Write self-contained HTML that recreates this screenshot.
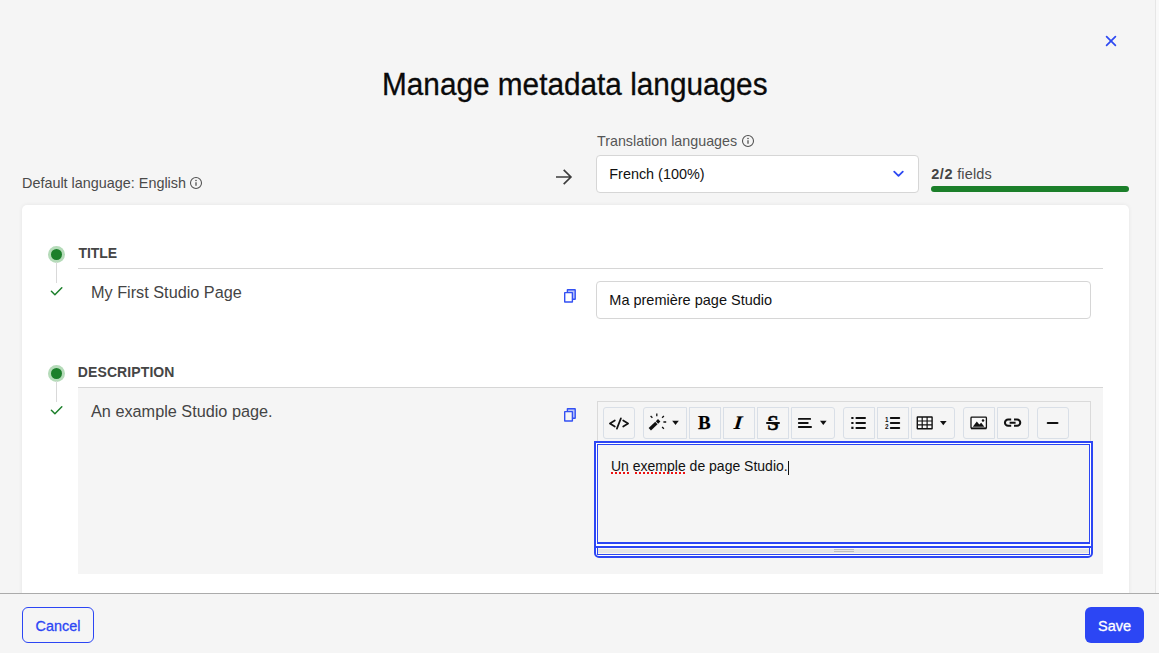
<!DOCTYPE html>
<html lang="en">
<head>
<meta charset="utf-8">
<title>Manage metadata languages</title>
<style>
*{box-sizing:border-box;margin:0;padding:0}
html,body{width:1159px;height:653px;overflow:hidden;background:#f5f5f5}
body{font-family:"Liberation Sans",sans-serif;color:#111;position:relative;-webkit-font-smoothing:antialiased}
.abs{position:absolute;white-space:nowrap}
.t{position:absolute;white-space:nowrap;line-height:1;transform-origin:0 0}
svg{position:absolute;overflow:visible}
#vline{left:1155px;top:0;width:4px;height:593px;background:#f9f9f9;border-left:1px solid #e6e6e6}
#h1{left:382px;top:68.6px;font-size:31px;color:#0a0a0a;transform:scaleX(.96);-webkit-text-stroke:.3px #0a0a0a}
#deflang{left:22px;top:175.8px;font-size:14.4px;color:#4a4a4a}
#trl{left:597px;top:133.8px;font-size:14.3px;color:#555}
#select{left:596px;top:155px;width:323px;height:38px;background:#fff;border:1px solid #d6d6d6;border-radius:4px}
#selecttxt{left:609.3px;top:166.8px;font-size:14.4px;color:#111}
#fields{left:931.3px;top:166.8px;font-size:14.5px;letter-spacing:.15px;color:#4a4a4a}
#fields b{color:#444;letter-spacing:.5px}
#bar{left:931px;top:186px;width:198px;height:6px;border-radius:3px;background:#1b7f2a}
#card{left:22px;top:205px;width:1107px;height:420px;background:#fff;border-radius:5px;box-shadow:0 0 4px rgba(0,0,0,.07)}
.dot{width:17px;height:17px;border-radius:50%;background:#b5dbb9}
.dot:after{content:"";position:absolute;left:3px;top:3px;width:11px;height:11px;border-radius:50%;background:#1b7f2a}
.stem{width:1px;background:#d9d9d9}
.lbl{font-size:14px;font-weight:bold;color:#454545;letter-spacing:-.05px}
.hr{left:78px;width:1025px;height:1px;background:#d6d6d6}
.src{font-size:16.25px;color:#444}
#input{left:596px;top:281px;width:495px;height:38px;background:#fff;border:1px solid #d6d6d6;border-radius:4px}
#inputtxt{left:609.3px;top:293.1px;font-size:14.5px;color:#111}
#graybox{left:78px;top:388px;width:1025px;height:186px;background:#f5f5f5}
#toolbar{left:597px;top:401px;width:494px;height:42px;border:1px solid #dadada;background:#f5f5f5}
.tb{position:absolute;top:407px;height:32px;border:1px solid #d9dfe7;border-radius:3px;background:#f5f5f5}
#edouter{left:594px;top:441px;width:499px;height:117px;border:2px solid #2c46f4;border-radius:0 0 5px 5px;background:#fff}
#edinner{left:597px;top:444px;width:493px;height:100px;border:1px solid #2c46f4;border-bottom-width:2px;background:#f5f5f5}
#edline{left:596px;top:546px;width:495px;height:2px;background:#2c46f4}
#edgrip{left:597px;top:548px;width:493px;height:7px;background:#e5e5e5;border:1px solid #2c46f4;border-top:0;box-shadow:inset 0 1px 0 #fbf8f0,inset 0 -1px 0 #fbf8f0}
#edtxt{left:611px;top:459px;font-size:14px;color:#111}
#caret{left:788px;top:460.5px;width:1px;height:14px;background:#111}
.sq{height:2px;background-image:linear-gradient(90deg,#e11 0,#e11 2px,transparent 2px,transparent 4px);background-size:4px 2px}
#footer{left:0;top:593px;width:1159px;height:60px;background:#f5f5f5;border-top:1px solid #ababab}
#cancel{left:22px;top:607px;width:72px;height:36px;border:1px solid #2c46f4;border-radius:6px;color:#2c46f4;font-size:14.4px;text-align:center;line-height:36px;-webkit-text-stroke:.3px #2c46f4}
#save{left:1085px;top:607px;width:59px;height:36px;border-radius:6px;background:#2c46f4;color:#fff;font-size:14.5px;text-align:center;line-height:38px;-webkit-text-stroke:.3px #fff}
</style>
</head>
<body>
<div class="abs" id="vline"></div>

<svg id="closex" style="left:1105px;top:35px" width="12" height="12" viewBox="0 0 12 12"><path d="M1.6 1.6 10.4 10.4M10.4 1.6 1.6 10.4" stroke="#2d49f2" stroke-width="1.7" stroke-linecap="round" fill="none"/></svg>

<div class="t" id="h1">Manage metadata languages</div>

<div class="t" id="deflang">Default language: English</div>
<svg class="info" style="left:189px;top:176px" width="14" height="14" viewBox="0 0 14 14"><circle cx="7" cy="7" r="5.5" fill="none" stroke="#505050" stroke-width="1.05"/><path d="M7 6.2v3.6" stroke="#505050" stroke-width="1.3"/><circle cx="7" cy="4.5" r=".8" fill="#505050"/></svg>

<svg id="arrow" style="left:555px;top:169px" width="18" height="16" viewBox="0 0 18 16"><path d="M1 8h15M8.7 .9 15.9 8 8.7 15.1" stroke="#3d3d3d" stroke-width="1.7" fill="none" stroke-linecap="butt" stroke-linejoin="miter"/></svg>

<div class="t" id="trl">Translation languages</div>
<svg class="info" style="left:741px;top:134px" width="14" height="14" viewBox="0 0 14 14"><circle cx="7" cy="7" r="5.5" fill="none" stroke="#505050" stroke-width="1.05"/><path d="M7 6.2v3.6" stroke="#505050" stroke-width="1.3"/><circle cx="7" cy="4.5" r=".8" fill="#505050"/></svg>

<div class="abs" id="select"></div>
<div class="t" id="selecttxt">French (100%)</div>
<svg id="chev" style="left:893px;top:170px" width="11" height="8" viewBox="0 0 11 8"><path d="M1.2 1.6 5.5 5.9 9.8 1.6" stroke="#2d49f2" stroke-width="1.8" fill="none" stroke-linecap="round" stroke-linejoin="round"/></svg>

<div class="t" id="fields"><b>2/2</b> fields</div>
<div class="abs" id="bar"></div>

<div class="abs" id="card"></div>

<!-- TITLE section -->
<div class="abs dot" style="left:48px;top:245.8px"></div>
<div class="abs stem" style="left:56px;top:262px;height:21px"></div>
<div class="t lbl" style="left:78.4px;top:246.1px">TITLE</div>
<div class="abs hr" style="top:268px"></div>
<svg class="chk" style="left:50px;top:286px" width="14" height="11" viewBox="0 0 14 11"><path d="M1.4 5.3 4.9 8.7 11.8 1.8" stroke="#1b7f2a" stroke-width="1.5" fill="none" stroke-linecap="round" stroke-linejoin="round"/></svg>
<div class="t src" style="left:91px;top:284px">My First Studio Page</div>
<svg class="copy" style="left:563px;top:288px" width="14" height="16" viewBox="0 0 14 16"><rect x="4.4" y="1.7" width="7.8" height="9.5" rx=".2" stroke="#3350f3" stroke-width="1.4" fill="#bcc7fa"/><rect x="1.7" y="4.6" width="7.7" height="9.4" rx=".2" stroke="#3350f3" stroke-width="1.4" fill="#fff"/></svg>
<div class="abs" id="input"></div>
<div class="t" id="inputtxt">Ma première page Studio</div>

<!-- DESCRIPTION section -->
<div class="abs dot" style="left:48px;top:364.8px"></div>
<div class="abs stem" style="left:56px;top:381px;height:21px"></div>
<div class="t lbl" style="left:77.8px;top:365.1px;letter-spacing:.1px">DESCRIPTION</div>
<div class="abs hr" style="top:387px"></div>
<div class="abs" id="graybox"></div>
<svg class="chk" style="left:50px;top:405px" width="14" height="11" viewBox="0 0 14 11"><path d="M1.4 5.3 4.9 8.7 11.8 1.8" stroke="#1b7f2a" stroke-width="1.5" fill="none" stroke-linecap="round" stroke-linejoin="round"/></svg>
<div class="t src" style="left:91px;top:403px">An example Studio page.</div>
<svg class="copy" style="left:563px;top:407px" width="14" height="16" viewBox="0 0 14 16"><rect x="4.4" y="1.7" width="7.8" height="9.5" rx=".2" stroke="#3350f3" stroke-width="1.4" fill="#bcc7fa"/><rect x="1.7" y="4.6" width="7.7" height="9.4" rx=".2" stroke="#3350f3" stroke-width="1.4" fill="#f5f5f5"/></svg>

<div class="abs" id="toolbar"></div>
<div class="tb" style="left:603px;width:32px"></div>
<div class="tb" style="left:643px;width:44px;border-radius:3px 0 0 3px"></div>
<div class="tb" style="left:689px;width:32px;border-radius:0"></div>
<div class="tb" style="left:723px;width:32px;border-radius:0"></div>
<div class="tb" style="left:757px;width:32px;border-radius:0"></div>
<div class="tb" style="left:791px;width:44px;border-radius:0 3px 3px 0"></div>
<div class="tb" style="left:843px;width:32px;border-radius:3px 0 0 3px"></div>
<div class="tb" style="left:877px;width:32px;border-radius:0"></div>
<div class="tb" style="left:911px;width:44px;border-radius:0 3px 3px 0"></div>
<div class="tb" style="left:963px;width:32px;border-radius:3px 0 0 3px"></div>
<div class="tb" style="left:997px;width:32px;border-radius:0 3px 3px 0"></div>
<div class="tb" style="left:1037px;width:32px"></div>

<!-- code icon -->
<svg style="left:603px;top:407px" width="32" height="32" viewBox="603 407 32 32"><path d="M614.8 420.5 609.9 423.5 614.8 426.5M623.2 420.5 628.1 423.5 623.2 426.5M620.9 418.4 616.9 428.6" stroke="#111" stroke-width="1.7" fill="none" stroke-linecap="round" stroke-linejoin="round"/></svg>
<!-- magic icon -->
<svg style="left:643px;top:407px" width="44" height="32" viewBox="643 407 44 32"><path d="M649.8 429.2 656.4 423" stroke="#111" stroke-width="3.4" fill="none" stroke-linecap="butt"/><path d="M657 422.4 659.2 420.3" stroke="#111" stroke-width="3.4" fill="none"/><path d="M656.8 413.4v2.8M650.6 416l1.8 1.8M663.9 416l-1.8 1.8M663.4 422h2.8M662.1 427l1.8 1.8" stroke="#111" stroke-width="1.3" fill="none"/><path d="M672.2 420.8h6.6l-3.3 4.3z" fill="#111"/></svg>
<!-- B I S -->
<div class="t" style="left:698px;top:413.1px;font:bold 19px/1 'Liberation Serif',serif;color:#000;-webkit-text-stroke:.25px #000">B</div>
<div class="t" style="left:735.4px;top:413.1px;font:italic bold 19px/1 'Liberation Serif',serif;color:#000;-webkit-text-stroke:.15px #000;transform:scaleX(1.1) skewX(-5deg)">I</div>
<div class="t" style="left:767.3px;top:412.6px;font:bold 20.5px/1 'Liberation Serif',serif;color:#000;-webkit-text-stroke:.45px #000">S</div>
<div class="abs" style="left:766px;top:421.4px;width:14px;height:3px;background:#f5f5f5"></div>
<div class="abs" style="left:766px;top:422.1px;width:14px;height:1.7px;background:#111;border-radius:1px"></div>
<!-- align -->
<svg style="left:791px;top:407px" width="44" height="32" viewBox="791 407 44 32"><path d="M798.8 418.9h11.4M798.8 423h9M798.8 427h12.3" stroke="#111" stroke-width="1.8" stroke-linecap="round" fill="none"/><path d="M820 420.8h6.6l-3.3 4.3z" fill="#111"/></svg>
<!-- ul -->
<svg style="left:843px;top:407px" width="32" height="32" viewBox="843 407 32 32"><path d="M851.3 418h2.2M851.3 423h2.2M851.3 427.9h2.2" stroke="#111" stroke-width="2.1" fill="none"/><path d="M856.4 418h8.6M856.4 423h8.6M856.4 427.9h8.6" stroke="#111" stroke-width="2" stroke-linecap="round" fill="none"/></svg>
<!-- ol -->
<svg style="left:877px;top:407px" width="32" height="32" viewBox="877 407 32 32"><path d="M890.8 418h8.4M890.8 423h8.4M890.8 427.9h8.4" stroke="#111" stroke-width="2" stroke-linecap="round" fill="none"/><text x="884.9" y="421.6" font-family="Liberation Sans,sans-serif" font-weight="bold" font-size="6.4" fill="#111">1</text><text x="884.9" y="429" font-family="Liberation Sans,sans-serif" font-weight="bold" font-size="6.4" fill="#111">2</text></svg>
<!-- table -->
<svg style="left:911px;top:407px" width="44" height="32" viewBox="911 407 44 32"><rect x="917.3" y="417" width="14.8" height="11.8" rx=".3" fill="#fafafa" stroke="#111" stroke-width="1.4"/><path d="M922.2 417v11.8M927.1 417v11.8M917.3 421h14.8M917.3 424.9h14.8" stroke="#111" stroke-width="1.2" fill="none"/><path d="M940 421h6.6l-3.3 4.3z" fill="#111"/></svg>
<!-- image -->
<svg style="left:963px;top:407px" width="32" height="32" viewBox="963 407 32 32"><rect x="971" y="417.2" width="15.4" height="11.2" rx=".8" fill="#fafafa" stroke="#111" stroke-width="1.3"/><path d="M971 428.4h15.4" stroke="#111" stroke-width="1.8"/><path d="M972.8 426.8l4-5.2 2.5 3 1.9-1.8 3.2 4z" fill="#111"/><circle cx="983" cy="420.4" r="1.25" fill="#111"/></svg>
<!-- link -->
<svg style="left:997px;top:407px" width="32" height="32" viewBox="997 407 32 32"><path d="M1011.2 419.5h-3.1a3.15 3.15 0 0 0 0 6.3h3.1M1014 419.5h3.1a3.15 3.15 0 0 1 0 6.3h-3.1M1009.6 422.65h6" stroke="#111" stroke-width="2.05" fill="none" stroke-linecap="butt"/></svg>
<!-- hr -->
<svg style="left:1037px;top:407px" width="32" height="32" viewBox="1037 407 32 32"><path d="M1047.8 423h9.6" stroke="#111" stroke-width="2.2" stroke-linecap="round" fill="none"/></svg>
<div class="abs" id="edouter"></div>
<div class="abs" id="edinner"></div>
<div class="abs" id="edline"></div>
<div class="abs" id="edgrip"></div>
<!-- grip -->
<div class="abs" style="left:834px;top:549px;width:20px;height:1px;background:#bdbdbd"></div>
<div class="abs" style="left:834px;top:551px;width:20px;height:1px;background:#bdbdbd"></div>
<div class="t" id="edtxt">Un exemple de page Studio.</div>
<div class="abs" id="caret"></div>
<div class="abs sq" style="left:611.3px;top:471.7px;width:18px"></div>
<div class="abs sq" style="left:634.6px;top:471.7px;width:50px"></div>

<div class="abs" id="footer"></div>
<div class="abs" id="cancel">Cancel</div>
<div class="abs" id="save">Save</div>
</body>
</html>
